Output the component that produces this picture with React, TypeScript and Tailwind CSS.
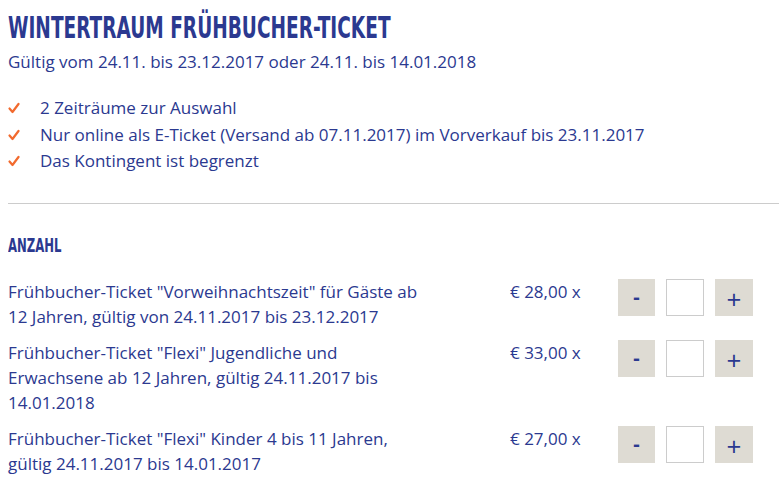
import React from 'react';

const tickets = [
    { label: 'Frühbucher-Ticket "Vorweihnachtszeit" für Gäste ab 12 Jahren, gültig von 24.11.2017 bis 23.12.2017', price: '€ 28,00 x' },
    { label: 'Frühbucher-Ticket "Flexi" Jugendliche und Erwachsene ab 12 Jahren, gültig 24.11.2017 bis 14.01.2018', price: '€ 33,00 x' },
    { label: 'Frühbucher-Ticket "Flexi" Kinder 4 bis 11 Jahren, gültig 24.11.2017 bis 14.01.2017', price: '€ 27,00 x' },
];

const features = [
    '2 Zeiträume zur Auswahl',
    'Nur online als E-Ticket (Versand ab 07.11.2017) im Vorverkauf bis 23.11.2017',
    'Das Kontingent ist begrenzt',
];

const Check = () => (
    <svg width="12" height="12" viewBox="0 0 12 12" className="shrink-0">
        <path d="M1.5 6.5 L4.5 10 L10.5 2" fill="none" stroke="#f26a2e" strokeWidth="2.2" strokeLinecap="round" strokeLinejoin="round" />
    </svg>
);

export default function App() {
    return (
        <div className="min-h-screen bg-white pl-2 text-[#2b3990] font-['Open_Sans',sans-serif] text-[17px] overflow-hidden">
            {/* Header */}
            <h1 className="pt-[10px] text-[31px] leading-[34px] font-bold uppercase whitespace-nowrap origin-left scale-x-[0.665] font-['DejaVu_Sans_Condensed',sans-serif]">
                Wintertraum Frühbucher-Ticket
            </h1>
            <p className="mt-[5px] leading-[25px]">Gültig vom 24.11. bis 23.12.2017 oder 24.11. bis 14.01.2018</p>

            <ul className="mt-[21px] flex flex-col">
                {features.map((f) => (
                    <li key={f} className="flex items-center gap-[20px] leading-[26.5px]">
                        <Check />
                        <span>{f}</span>
                    </li>
                ))}
            </ul>

            <div className="mt-[28px] border-t border-[#cccccc]" />

            <h2 className="mt-[31px] text-[19.5px] leading-[22px] font-bold uppercase whitespace-nowrap origin-left scale-x-[0.665] font-['DejaVu_Sans_Condensed',sans-serif]">
                Anzahl
            </h2>

            {/* Ticket rows */}
            <div className="mt-[22px] flex flex-col gap-[11px]">
                {tickets.map((t) => (
                    <div key={t.price} className="flex items-start">
                        <div className="w-[418px] leading-[25px]">{t.label}</div>
                        <div className="ml-[84px] w-[108px] leading-[25px]">{t.price}</div>
                        <div className="flex items-center gap-[11px]">
                            <button className="w-[37px] h-[37px] bg-[#dedbd3] text-[#2b3990] text-[20px] font-bold leading-none">-</button>
                            <input className="w-[38px] h-[37px] border border-[#cccccc] bg-white outline-none" />
                            <button className="w-[38px] h-[37px] bg-[#dedbd3] text-[#2b3990] text-[26px] pt-[3px] leading-none">+</button>
                        </div>
                    </div>
                ))}
            </div>
        </div>
    );
}
